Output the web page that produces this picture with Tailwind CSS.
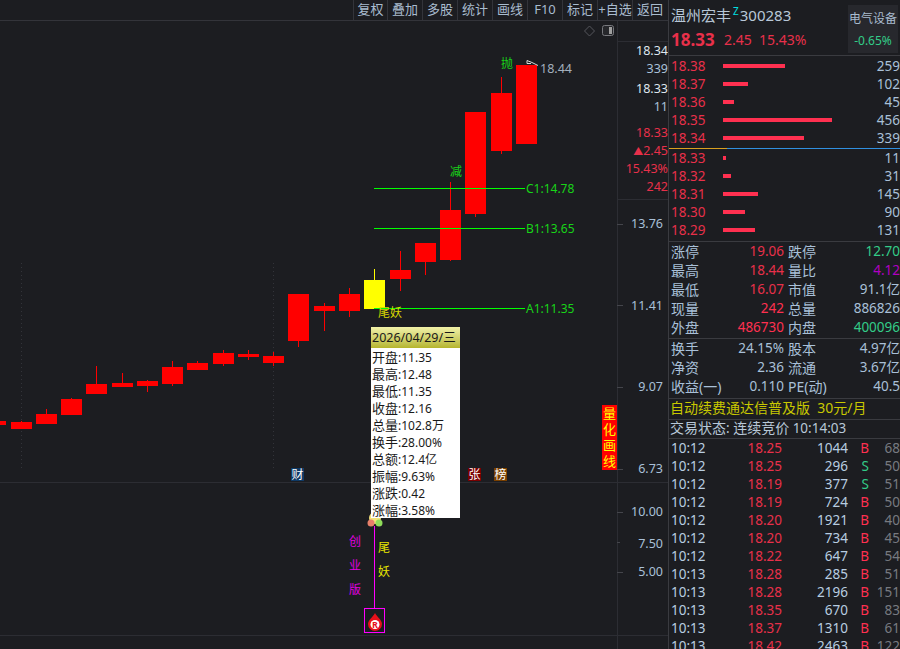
<!DOCTYPE html>
<html lang="en">
  <head>
    <meta charset="UTF-8" />
    <title>温州宏丰 300283</title>
    <script src="https://cdn.jsdelivr.net/npm/@tailwindcss/browser@4"></script>
  </head>
  <body class="bg-[#1c1d21]">
    <div class="flex w-[900px] h-[649px] overflow-hidden bg-[#1c1d21] text-[#a9c0d8] text-[13.5px] leading-[18px] font-['Noto_Sans','Noto_Sans_CJK_SC',sans-serif]">
      <!-- Left: toolbar + chart -->
      <div class="w-[669px] shrink-0 flex flex-col border-r border-[#3a3b40]">
        <div class="h-[21px] shrink-0 flex justify-end pr-[1px] border-b border-[#33343a] text-[13px] leading-[19px] text-[#a9bccf]">
          <div class="w-[34px] text-center border-l border-[#33343a]">复权</div>
          <div class="w-[35px] text-center border-l border-[#33343a]">叠加</div>
          <div class="w-[35px] text-center border-l border-[#33343a]">多股</div>
          <div class="w-[35px] text-center border-l border-[#33343a]">统计</div>
          <div class="w-[35px] text-center border-l border-[#33343a]">画线</div>
          <div class="w-[35px] text-center border-l border-[#33343a]">F10</div>
          <div class="w-[35px] text-center border-l border-[#33343a]">标记</div>
          <div class="w-[35px] text-center border-l border-[#33343a] whitespace-nowrap overflow-hidden">+自选</div>
          <div class="w-[35px] text-center border-l border-[#33343a]">返回</div>
        </div>

        <div class="relative flex-1">
          <svg width="668" height="628" viewBox="0 21 668 628" class="block">
            <!-- grid -->
            <path d="M21.5 263V468M273.5 263V468" stroke="#33343a" stroke-dasharray="1 3" />
            <path d="M0 482.5H668M0 635.5H668M617.5 21V649M617 41.5H668M617 199.5H668" stroke="#2c2d33" />
            <path d="M617 224.5H623M617 305.5H623M617 387.5H623M617 469.5H623M617 512.5H623M617 542.5H620M617 572.5H623" stroke="#44454b" />

            <!-- wicks -->
            <g fill="#ff0000">
              <rect x="21" y="421" width="1" height="2" />
              <rect x="46" y="409" width="1" height="6" />
              <rect x="71" y="398" width="1" height="2" />
              <rect x="96" y="366" width="1" height="19" />
              <rect x="122" y="373" width="1" height="11" />
              <rect x="147" y="380" width="1" height="12" />
              <rect x="172" y="361" width="1" height="25" />
              <rect x="197" y="361" width="1" height="3" />
              <rect x="223" y="350" width="1" height="16" />
              <rect x="248" y="350" width="1" height="10" />
              <rect x="273" y="352" width="1" height="14" />
              <rect x="298" y="340" width="1" height="7" />
              <rect x="324" y="303" width="1" height="28" />
              <rect x="349" y="288" width="1" height="29" />
              <rect x="400" y="251" width="1" height="40" />
              <rect x="425" y="243" width="1" height="32" />
              <rect x="450" y="182" width="1" height="79" />
              <rect x="475" y="210" width="1" height="7" />
              <rect x="501" y="77" width="1" height="77" />
            </g>
            <!-- candle bodies -->
            <g fill="#ff0000">
              <rect x="0" y="421" width="6" height="4" />
              <rect x="11" y="422" width="21" height="7" />
              <rect x="36" y="414" width="21" height="10" />
              <rect x="61" y="399" width="21" height="16" />
              <rect x="86" y="384" width="21" height="10" />
              <rect x="112" y="383" width="21" height="4" />
              <rect x="137" y="381" width="21" height="5" />
              <rect x="162" y="367" width="21" height="17" />
              <rect x="187" y="363" width="21" height="7" />
              <rect x="213" y="353" width="21" height="11" />
              <rect x="238" y="354" width="21" height="3" />
              <rect x="263" y="356" width="21" height="7" />
              <rect x="288" y="294" width="21" height="47" />
              <rect x="314" y="306" width="21" height="5" />
              <rect x="339" y="294" width="21" height="17" />
              <rect x="390" y="270" width="21" height="9" />
              <rect x="415" y="243" width="21" height="19" />
              <rect x="440" y="210" width="21" height="50" />
              <rect x="465" y="112" width="21" height="102" />
              <rect x="491" y="93" width="21" height="58" />
              <rect x="516" y="65" width="21" height="79" />
            </g>
            <rect x="374" y="269" width="1" height="11" fill="#ffff00" />
            <rect x="364" y="280" width="21" height="29" fill="#ffff00" />

            <!-- level lines -->
            <path d="M374 188.5H525M374 228.5H525M374 308.5H525" stroke="#00ff00" />
            <g fill="#18d418" font-size="12">
              <text x="526" y="192.5">C1:14.78</text>
              <text x="526" y="232.5">B1:13.65</text>
              <text x="526" y="312.5">A1:11.35</text>
              <text x="501" y="68">抛</text>
              <text x="450" y="176">减</text>
            </g>
            <text x="378" y="317" fill="#d8d800" font-size="12">尾妖</text>

            <!-- high marker -->
            <path d="M527 60.5L532 62.5L538 65.5M527 60.5V63.5L531 63.5" stroke="#d8d8d8" fill="none" />
            <text x="540" y="72.5" fill="#a3afbd" font-size="12.5">18.44</text>

            <!-- top right icons -->
            <path d="M589.5 26L594.5 31L589.5 36L584.5 31Z" fill="none" stroke="#55565c" />
            <rect x="602.5" y="25.5" width="11" height="10" rx="2" fill="#26272b" stroke="#77787d" />
            <rect x="609" y="27" width="3" height="7" fill="#a0a0a0" />

            <!-- axis labels -->
            <g text-anchor="end" font-size="12.5" fill="#a9c0d8">
              <text x="668" y="55" fill="#dfe6ee">18.34</text>
              <text x="668" y="73">339</text>
              <text x="668" y="93" fill="#dfe6ee">18.33</text>
              <text x="668" y="111">11</text>
              <text x="668" y="137" fill="#e8304a">18.33</text>
              <text x="668" y="155" fill="#e8304a"><tspan font-size="10">▲</tspan>2.45</text>
              <text x="668" y="173" fill="#e8304a">15.43%</text>
              <text x="668" y="191" fill="#e8304a">242</text>
              <text x="663" y="228">13.76</text>
              <text x="663" y="310">11.41</text>
              <text x="663" y="391">9.07</text>
              <text x="663" y="473">6.73</text>
              <text x="663" y="516">10.00</text>
              <text x="663" y="548">7.50</text>
              <text x="663" y="576">5.00</text>
            </g>

            <!-- event badges -->
            <rect x="291" y="468" width="13" height="13" fill="#0f3a66" />
            <text x="291.5" y="479" fill="#fff" font-size="12">财</text>
            <rect x="468" y="468" width="13" height="13" fill="#7a0000" />
            <text x="468.5" y="479" fill="#fff" font-size="12">张</text>
            <rect x="494" y="468" width="13" height="13" fill="#7a4000" />
            <text x="494.5" y="479" fill="#fff" font-size="12">榜</text>

            <!-- lower panel signal -->
            <g fill="#e000e0" font-size="12">
              <text x="349" y="546">创</text>
              <text x="349" y="570">业</text>
              <text x="349" y="594">版</text>
            </g>
            <g fill="#e6e600" font-size="12">
              <text x="378" y="552">尾</text>
              <text x="378" y="576">妖</text>
            </g>
            <circle cx="375" cy="518" r="6" fill="#f4e27a" />
            <circle cx="371" cy="523" r="3.5" fill="#e8806a" />
            <circle cx="379" cy="523" r="3.5" fill="#8fdc5a" />
            <path d="M374.5 526V608" stroke="#ff00ff" />
            <rect x="364.5" y="608.5" width="20" height="24" fill="none" stroke="#ff00ff" />
            <path d="M375 613C377 617 382 620 382 624A7 7 0 0 1 368 624C368 620 373 617 375 613Z" fill="#e8101a" />
            <circle cx="375" cy="624.5" r="4.5" fill="#fff" />
            <text x="375" y="628" text-anchor="middle" fill="#e8101a" font-size="9" font-weight="700">R</text>
          </svg>

          <!-- tooltip -->
          <div class="absolute left-[371px] top-[306px] w-[89px] h-[191px] bg-white text-[#1a1a1a] text-[12px] leading-[17px]">
            <div class="h-[21px] pl-[1px] text-[12.5px] leading-[21px] whitespace-nowrap bg-gradient-to-b from-[#f2f2a8] to-[#b5b52a]">2026/04/29/三</div>
            <div class="pl-[1px] pt-[1px]">
              <div><span class="text-[13px]">开盘</span>:11.35</div>
              <div><span class="text-[13px]">最高</span>:12.48</div>
              <div><span class="text-[13px]">最低</span>:11.35</div>
              <div><span class="text-[13px]">收盘</span>:12.16</div>
              <div><span class="text-[13px]">总量</span>:102.8万</div>
              <div><span class="text-[13px]">换手</span>:28.00%</div>
              <div><span class="text-[13px]">总额</span>:12.4亿</div>
              <div><span class="text-[13px]">振幅</span>:9.63%</div>
              <div><span class="text-[13px]">涨跌</span>:0.42</div>
              <div><span class="text-[13px]">涨幅</span>:3.58%</div>
            </div>
          </div>

          <!-- quant drawing tag -->
          <div class="absolute left-[602px] top-[384px] w-[15px] h-[65px] bg-[#ff0000] text-[#ffff00] text-[13px] leading-[16px] flex flex-col items-center">
            <span>量</span><span>化</span><span>画</span><span>线</span>
          </div>
        </div>
      </div>

      <!-- Right: quote panel -->
      <div class="w-[231px] flex flex-col">
        <div class="h-[56px] shrink-0 flex justify-between border-b border-[#3a3b40] pl-[2px] pr-[2px]">
          <div>
            <div class="flex h-[29px] items-center text-[15px] text-[#b8c8d8] whitespace-nowrap">
              <span>温州宏丰</span><span class="text-[10px] text-[#00e0e0] leading-none mb-[8px] ml-[2px] mr-[1px]">Z</span><span>300283</span>
            </div>
            <div class="flex items-center h-[22px] text-[#e8304a] text-[14px] whitespace-nowrap">
              <span class="font-bold text-[17px] w-[53px]">18.33</span><span class="w-[35px]">2.45</span><span>15.43%</span>
            </div>
          </div>
          <div class="w-[50px] mt-[5px] h-[48px] bg-[#27282d] text-center text-[12px]">
            <div class="h-[27px] leading-[27px] text-[#a9bccf]">电气设备</div>
            <div class="text-[#33cc88]">-0.65%</div>
          </div>
        </div>

        <!-- order book -->
        <div class="shrink-0 pt-[1px] pl-[2px] leading-[18px]">
          <div class="flex items-center h-[18px]"><span class="w-[52px] text-[#e8304a]">18.38</span><span class="h-[4px] w-[62px] bg-[#ff3050]"></span><span class="flex-1 text-right">259</span></div>
          <div class="flex items-center h-[18px]"><span class="w-[52px] text-[#e8304a]">18.37</span><span class="h-[4px] w-[25px] bg-[#ff3050]"></span><span class="flex-1 text-right">102</span></div>
          <div class="flex items-center h-[18px]"><span class="w-[52px] text-[#e8304a]">18.36</span><span class="h-[4px] w-[11px] bg-[#ff3050]"></span><span class="flex-1 text-right">45</span></div>
          <div class="flex items-center h-[18px]"><span class="w-[52px] text-[#e8304a]">18.35</span><span class="h-[4px] w-[109px] bg-[#ff3050]"></span><span class="flex-1 text-right">456</span></div>
          <div class="flex items-center h-[18px]"><span class="w-[52px] text-[#e8304a]">18.34</span><span class="h-[4px] w-[81px] bg-[#ff3050]"></span><span class="flex-1 text-right">339</span></div>
        </div>
        <div class="flex shrink-0 h-[1px] mt-[1px]"><div class="w-[58px] bg-[#d8a020]"></div><div class="flex-1 bg-[#3090e0]"></div></div>
        <div class="shrink-0 pl-[2px] leading-[18px]">
          <div class="flex items-center h-[18px]"><span class="w-[52px] text-[#e8304a]">18.33</span><span class="h-[4px] w-[3px] bg-[#ff3050]"></span><span class="flex-1 text-right">11</span></div>
          <div class="flex items-center h-[18px]"><span class="w-[52px] text-[#e8304a]">18.32</span><span class="h-[4px] w-[8px] bg-[#ff3050]"></span><span class="flex-1 text-right">31</span></div>
          <div class="flex items-center h-[18px]"><span class="w-[52px] text-[#e8304a]">18.31</span><span class="h-[4px] w-[35px] bg-[#ff3050]"></span><span class="flex-1 text-right">145</span></div>
          <div class="flex items-center h-[18px]"><span class="w-[52px] text-[#e8304a]">18.30</span><span class="h-[4px] w-[22px] bg-[#ff3050]"></span><span class="flex-1 text-right">90</span></div>
          <div class="flex items-center h-[18px]"><span class="w-[52px] text-[#e8304a]">18.29</span><span class="h-[4px] w-[32px] bg-[#ff3050]"></span><span class="flex-1 text-right">131</span></div>
        </div>

        <!-- stats -->
        <div class="shrink-0 mt-[2px] border-t border-[#3a3b40] h-[97px] pl-[2px] grid grid-cols-[113px_1fr] auto-rows-[19px] leading-[19px] whitespace-nowrap">
          <div class="flex justify-between"><span class="text-[14px]">涨停</span><span class="text-[#e8304a]">19.06</span></div>
          <div class="flex justify-between pl-[4px]"><span class="text-[14px]">跌停</span><span class="text-[#33cc88]">12.70</span></div>
          <div class="flex justify-between"><span class="text-[14px]">最高</span><span class="text-[#e8304a]">18.44</span></div>
          <div class="flex justify-between pl-[4px]"><span class="text-[14px]">量比</span><span class="text-[#b000c0]">4.12</span></div>
          <div class="flex justify-between"><span class="text-[14px]">最低</span><span class="text-[#e8304a]">16.07</span></div>
          <div class="flex justify-between pl-[4px]"><span class="text-[14px]">市值</span><span>91.1亿</span></div>
          <div class="flex justify-between"><span class="text-[14px]">现量</span><span class="text-[#ff3050]">242</span></div>
          <div class="flex justify-between pl-[4px]"><span class="text-[14px]">总量</span><span>886826</span></div>
          <div class="flex justify-between"><span class="text-[14px]">外盘</span><span class="text-[#ff3050]">486730</span></div>
          <div class="flex justify-between pl-[4px]"><span class="text-[14px]">内盘</span><span class="text-[#33cc88]">400096</span></div>
        </div>
        <div class="shrink-0 border-t border-[#3a3b40] h-[60px] pl-[2px] grid grid-cols-[113px_1fr] auto-rows-[19px] leading-[19px] whitespace-nowrap">
          <div class="flex justify-between"><span class="text-[14px]">换手</span><span>24.15%</span></div>
          <div class="flex justify-between pl-[4px]"><span class="text-[14px]">股本</span><span>4.97亿</span></div>
          <div class="flex justify-between"><span class="text-[14px]">净资</span><span>2.36</span></div>
          <div class="flex justify-between pl-[4px]"><span class="text-[14px]">流通</span><span>3.67亿</span></div>
          <div class="flex justify-between"><span class="text-[14px]">收益(一)</span><span>0.110</span></div>
          <div class="flex justify-between pl-[4px]"><span class="text-[14px]">PE(动)</span><span>40.5</span></div>
        </div>
        <div class="shrink-0 border-t border-[#3a3b40] h-[21px] pl-[1px] text-[14px] leading-[18px] text-[#c8c800] whitespace-nowrap">自动续费通达信普及版&nbsp; 30元/月</div>
        <div class="shrink-0 border-t border-[#3a3b40] h-[19px] pl-[1px] leading-[16px] text-[#b8c8d8] whitespace-nowrap"><span class="text-[14px]">交易状态</span>: <span class="text-[14px]">连续竞价</span> 10:14:03</div>

        <!-- tick list -->
        <div class="shrink-0 border-t border-[#3a3b40] pl-[2px] leading-[18px] text-[#b8cde0]">
          <div class="grid grid-cols-[54px_57px_66px_21px_1fr] h-[18px]"><span>10:12</span><span class="text-right text-[#e8304a]">18.25</span><span class="text-right">1044</span><span class="text-right text-[#ff3050]">B</span><span class="text-right text-[#777a80]">68</span></div>
          <div class="grid grid-cols-[54px_57px_66px_21px_1fr] h-[18px]"><span>10:12</span><span class="text-right text-[#e8304a]">18.25</span><span class="text-right">296</span><span class="text-right text-[#33cc88]">S</span><span class="text-right text-[#777a80]">50</span></div>
          <div class="grid grid-cols-[54px_57px_66px_21px_1fr] h-[18px]"><span>10:12</span><span class="text-right text-[#e8304a]">18.19</span><span class="text-right">377</span><span class="text-right text-[#33cc88]">S</span><span class="text-right text-[#777a80]">51</span></div>
          <div class="grid grid-cols-[54px_57px_66px_21px_1fr] h-[18px]"><span>10:12</span><span class="text-right text-[#e8304a]">18.19</span><span class="text-right">724</span><span class="text-right text-[#ff3050]">B</span><span class="text-right text-[#777a80]">50</span></div>
          <div class="grid grid-cols-[54px_57px_66px_21px_1fr] h-[18px]"><span>10:12</span><span class="text-right text-[#e8304a]">18.20</span><span class="text-right">1921</span><span class="text-right text-[#ff3050]">B</span><span class="text-right text-[#777a80]">40</span></div>
          <div class="grid grid-cols-[54px_57px_66px_21px_1fr] h-[18px]"><span>10:12</span><span class="text-right text-[#e8304a]">18.20</span><span class="text-right">734</span><span class="text-right text-[#ff3050]">B</span><span class="text-right text-[#777a80]">45</span></div>
          <div class="grid grid-cols-[54px_57px_66px_21px_1fr] h-[18px]"><span>10:12</span><span class="text-right text-[#e8304a]">18.22</span><span class="text-right">647</span><span class="text-right text-[#ff3050]">B</span><span class="text-right text-[#777a80]">54</span></div>
          <div class="grid grid-cols-[54px_57px_66px_21px_1fr] h-[18px]"><span>10:13</span><span class="text-right text-[#e8304a]">18.28</span><span class="text-right">285</span><span class="text-right text-[#ff3050]">B</span><span class="text-right text-[#777a80]">51</span></div>
          <div class="grid grid-cols-[54px_57px_66px_21px_1fr] h-[18px]"><span>10:13</span><span class="text-right text-[#e8304a]">18.28</span><span class="text-right">2196</span><span class="text-right text-[#ff3050]">B</span><span class="text-right text-[#777a80]">151</span></div>
          <div class="grid grid-cols-[54px_57px_66px_21px_1fr] h-[18px]"><span>10:13</span><span class="text-right text-[#e8304a]">18.35</span><span class="text-right">670</span><span class="text-right text-[#ff3050]">B</span><span class="text-right text-[#777a80]">83</span></div>
          <div class="grid grid-cols-[54px_57px_66px_21px_1fr] h-[18px]"><span>10:13</span><span class="text-right text-[#e8304a]">18.37</span><span class="text-right">1310</span><span class="text-right text-[#ff3050]">B</span><span class="text-right text-[#777a80]">61</span></div>
          <div class="grid grid-cols-[54px_57px_66px_21px_1fr] h-[18px]"><span>10:13</span><span class="text-right text-[#e8304a]">18.42</span><span class="text-right">2463</span><span class="text-right text-[#ff3050]">B</span><span class="text-right text-[#777a80]">122</span></div>
        </div>
      </div>
    </div>
  </body>
</html>
